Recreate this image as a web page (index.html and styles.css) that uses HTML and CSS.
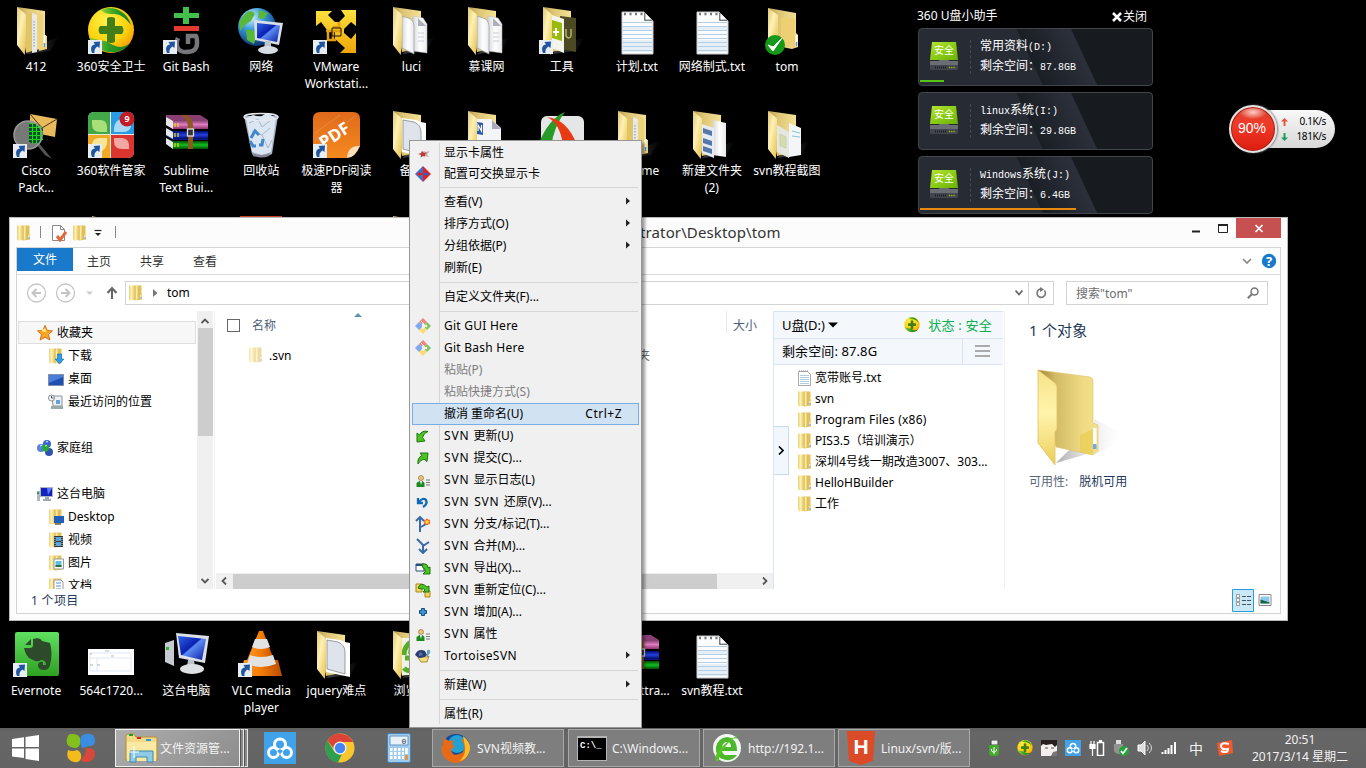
FILE: index.html
```html
<!DOCTYPE html>
<html lang="zh-CN">
<head>
<meta charset="utf-8">
<title>Desktop</title>
<link rel="stylesheet" href="styles.css">
</head>
<body>
<svg class="defs" width="0" height="0">
<defs>
<linearGradient id="gFlap" x1="0" y1="0" x2="1" y2="1"><stop offset="0" stop-color="#e2c874"/><stop offset=".4" stop-color="#fdf1b4"/><stop offset="1" stop-color="#e6c04c"/></linearGradient>
<linearGradient id="gBack" x1="0" y1="0" x2="1" y2="0"><stop offset="0" stop-color="#b89a50"/><stop offset=".35" stop-color="#ddc474"/><stop offset="1" stop-color="#f5e294"/></linearGradient>
<linearGradient id="gPage" x1="0" y1="0" x2="1" y2="0"><stop offset="0" stop-color="#d5d8dc"/><stop offset=".5" stop-color="#fff"/><stop offset="1" stop-color="#e8eaee"/></linearGradient>
<radialGradient id="gYellow" cx=".4" cy=".3" r=".8"><stop offset="0" stop-color="#fff24a"/><stop offset=".6" stop-color="#fcd00a"/><stop offset="1" stop-color="#f08a10"/></radialGradient>
<linearGradient id="gLeaf" x1="0" y1="0" x2="1" y2="0"><stop offset="0" stop-color="#8fd430"/><stop offset=".5" stop-color="#2f9c26"/><stop offset="1" stop-color="#147c20"/></linearGradient>
<radialGradient id="gGlobe" cx=".35" cy=".25" r=".8"><stop offset="0" stop-color="#d8f2ff"/><stop offset=".4" stop-color="#3a9ada"/><stop offset="1" stop-color="#08306c"/></radialGradient>
<linearGradient id="gScreen" x1="0" y1="0" x2="1" y2="1"><stop offset="0" stop-color="#2f63e8"/><stop offset=".45" stop-color="#0a20b0"/><stop offset=".5" stop-color="#5b8cf4"/><stop offset="1" stop-color="#0818a0"/></linearGradient>
<linearGradient id="gVm" x1="0" y1="0" x2="0" y2="1"><stop offset="0" stop-color="#ffe23c"/><stop offset="1" stop-color="#eda508"/></linearGradient>
<linearGradient id="gOrange" x1="0" y1="0" x2="0" y2="1"><stop offset="0" stop-color="#e06a1c"/><stop offset="1" stop-color="#f58a1e"/></linearGradient>
<linearGradient id="gPink" x1="0" y1="0" x2="0" y2="1"><stop offset="0" stop-color="#7c3a68"/><stop offset=".5" stop-color="#e07cc0"/><stop offset="1" stop-color="#8c3470"/></linearGradient>
<linearGradient id="gBlue" x1="0" y1="0" x2="0" y2="1"><stop offset="0" stop-color="#000c70"/><stop offset=".5" stop-color="#2540e0"/><stop offset="1" stop-color="#000a60"/></linearGradient>
<linearGradient id="gGr" x1="0" y1="0" x2="0" y2="1"><stop offset="0" stop-color="#044a04"/><stop offset=".5" stop-color="#10c020"/><stop offset="1" stop-color="#044a04"/></linearGradient>
<linearGradient id="gEver" x1="0" y1="0" x2="0" y2="1"><stop offset="0" stop-color="#5fe060"/><stop offset="1" stop-color="#2fa022"/></linearGradient>
<linearGradient id="gShade" x1="0" y1="0" x2="1" y2="0"><stop offset="0" stop-color="#555" stop-opacity=".8"/><stop offset="1" stop-color="#555" stop-opacity="0"/></linearGradient>
<linearGradient id="gCone" x1="0" y1="0" x2="1" y2="0"><stop offset="0" stop-color="#ff9a24"/><stop offset=".5" stop-color="#f67c08"/><stop offset="1" stop-color="#b84c00"/></linearGradient>
<linearGradient id="gDisk" x1="0" y1="0" x2="1" y2="1"><stop offset="0" stop-color="#b5e433"/><stop offset=".5" stop-color="#8ccc14"/><stop offset="1" stop-color="#69b00a"/></linearGradient>
<linearGradient id="gSf" x1="0" y1="0" x2="1" y2="0"><stop offset="0" stop-color="#ecd070"/><stop offset=".4" stop-color="#fdf2b8"/><stop offset="1" stop-color="#dcb94c"/></linearGradient>
<linearGradient id="gInner" x1="0" y1="0" x2="1" y2="0"><stop offset="0" stop-color="#a3873c"/><stop offset=".3" stop-color="#d3bb66"/><stop offset=".75" stop-color="#efdb84"/><stop offset="1" stop-color="#f3e08c"/></linearGradient>
<linearGradient id="gFront" x1="0" y1="0" x2="0" y2="1"><stop offset="0" stop-color="#f5e389"/><stop offset=".45" stop-color="#fff4ab"/><stop offset=".75" stop-color="#f6e083"/><stop offset="1" stop-color="#eccb50"/></linearGradient>
<linearGradient id="bigShade" x1="0" y1="0" x2="1" y2="0"><stop offset="0" stop-color="#777"/><stop offset="1" stop-color="#eee" stop-opacity="0"/></linearGradient>
<pattern id="pMesh" width="4" height="4" patternUnits="userSpaceOnUse"><rect width="4" height="4" fill="#052"/><path d="M0 .5h4M.5 0v4" stroke="#1fd61f"/></pattern>
</defs>

<symbol id="link" viewBox="0 0 14 14"><rect width="14" height="14" fill="#e9edf2"/><path d="M4 13C2 8 3.500 5 7 4.500L5.500 2 12 1.500 11.500 8 9.500 6.500C7 8 6 10 6.500 13z" fill="#1f559e"/></symbol>
<symbol id="fbase" viewBox="0 0 48 48"><path d="M30 36l17-6-9 14-24 3z" fill="url(#gShade)"/><path d="M5 0l28 4v37l-19 4z" fill="url(#gBack)"/></symbol>
<symbol id="flap" viewBox="0 0 48 48"><path d="M5 0l9 7.500v23l-1.200 17.500L5 38z" fill="url(#gFlap)"/></symbol>
<symbol id="folders" viewBox="0 0 48 48"><use href="#fbase"/><path d="M14 5l6 2v37l-6 2z" fill="#e0c468"/><path d="M20 6l5 2v37l-5 1z" fill="#e8e8e8"/><path d="M22 14v26" stroke="#6a9ad0" stroke-dasharray="1.500 1.500"/><path d="M25 6l6 2v19l4 2v13l-8 2z" fill="#ecd278"/><path d="M32.500 28v12" stroke="#fff" stroke-width="2"/><path d="M32.500 36v4" stroke="#4a9ae8" stroke-width="1.500"/><use href="#flap"/></symbol>
<symbol id="fdocs" viewBox="0 0 48 48"><use href="#fbase"/><path d="M25 9l10 2 4 6v29l-14-2z" fill="url(#gPage)" stroke="#bbb" stroke-width=".5"/><path d="M14 9l9 3c3 4 3 6 3 9v26l-12-6z" fill="url(#gPage)" stroke="#999" stroke-width=".7"/><path d="M30 26h6M30 30h6M30 34h6" stroke="#c6ccd6"/><path d="M30 11v8h8z" fill="#aab0ba"/><use href="#flap"/></symbol>
<symbol id="fword" viewBox="0 0 48 48"><use href="#fbase"/><path d="M14 8h14l10 9v30l-24-6z" fill="#f4f5f7"/><path d="M29 9l9 9h-9z" fill="#aab"/><path d="M14 11l6 1v12l-6-1z" fill="#2c5aa8"/><path d="M15 20v-6l3.500 6v-6" stroke="#fff" fill="none" stroke-width="1.200"/><use href="#flap"/></symbol>
<symbol id="fpics" viewBox="0 0 48 48"><use href="#fbase"/><path d="M25 9l13 3v34l-13-2z" fill="url(#gPage)"/><path d="M14 13l12 4v30l-12-5z" fill="#e6ebf2"/><path d="M15 17l9 3v5l-9-3zM15 27l9 3v5l-9-3zM15 35l9 3v5l-9-3z" fill="#5578a8"/><use href="#flap"/></symbol>
<symbol id="fshots" viewBox="0 0 48 48"><use href="#fbase"/><path d="M26 12l12 5v27l-12 2z" fill="#f2f6f8"/><path d="M29 20l8 2M29 25l8 1" stroke="#8ac4dc"/><path d="M14 14l12 7v26l-12-6z" fill="#e5e6e0"/><path d="M17 23l6 3v11l-6-2z" fill="#d4dfa8" stroke="#bbb" stroke-width=".5"/><use href="#flap"/></symbol>
<symbol id="fone" viewBox="0 0 48 48"><use href="#fbase"/><path d="M14 7l14 2 5 2 5 1v34l-24-5z" fill="#fff"/><path d="M15 9l11 2c6 3 7 6 7 12v20l-18-5z" fill="#dfe4ec" stroke="#777" stroke-width=".7"/><use href="#flap"/></symbol>
<symbol id="ftools" viewBox="0 0 48 48"><use href="#fbase"/><path d="M22 9l16 2v34l-16-3z" fill="#4b4a24"/><path d="M28 22v7q3 4 5 0v-7" fill="none" stroke="#b6b26a" stroke-width="1.500"/><path d="M14 8l12 4v34l-12-5z" fill="#f4f4ec"/><path d="M14 13l10 3v18l-10-3z" fill="#97ba0c"/><path d="M18 21v8M15 25h6" stroke="#fff" stroke-width="2"/><use href="#flap"/></symbol>
<symbol id="ftom" viewBox="0 0 48 48"><path d="M5 1l28 5v20l2 2v12l-6 2-15-3z" fill="url(#gBack)"/><path d="M18 10l14 2v29l-14-3z" fill="#edcf74"/><path d="M33.500 28v11" stroke="#fff" stroke-width="2"/><path d="M33.500 35v4" stroke="#4a9ae8" stroke-width="1.500"/><path d="M5 1l10 7v32l-10-4z" fill="url(#gFlap)"/><circle cx="12" cy="38" r="10" fill="#149a18"/><path d="M5 38l5 6 9-13-9 9z" fill="#fff" stroke="#fff"/></symbol>
<symbol id="txt" viewBox="0 0 48 48"><path d="M9 5h22l9 9v33H9z" fill="#fbfcfd" stroke="#c6cacf"/><path d="M10 19h29v4H10zM10 33h29v12H10z" fill="#dbe6f2" opacity=".6"/><path d="M10 15.500h29M10 19.500h29M10 23.500h29M10 27.500h29M10 31.500h29M10 35.500h29M10 39.500h29M10 43.500h29" stroke="#b4cfe4"/><path d="M31 5l9 9h-9z" fill="#8b9096"/><path d="M32 6v7h7" fill="#fff" stroke="#555" stroke-width=".7"/><path d="M11 7h19" stroke="#777" stroke-width="2.500" stroke-dasharray="2 3.500"/></symbol>
<symbol id="i360" viewBox="0 0 48 48"><circle cx="24" cy="23" r="23" fill="url(#gYellow)"/><path d="M14 3C26-3 41 5 44 18c-7-9-12-11-18-11-6 0-9-1-12-4z" fill="url(#gLeaf)"/><path d="M2 30c8 4 15 2 22 7 7 4 12 4 18 0C35 49 10 49 2 30z" fill="url(#gLeaf)"/><path d="M20 11q4-2 8 0v8h7q3 4 0 8h-7v8q-4 2-8 0v-8h-7q-3-4 0-8h7z" fill="#427d16"/></symbol>
<symbol id="gitbash" viewBox="0 0 48 48"><path d="M21 0h6v6h10v5H27v6h-6v-6H12V6h9z" fill="#43c04b"/><path d="M12 19h25v5H12z" fill="#e23a30"/><path d="M16 31c-3 7-1 14 8 14 10 0 11-5 11-9 0-3 0-6-1-7h-8v8" fill="none" stroke="#77777b" stroke-width="4.500"/></symbol>
<symbol id="network" viewBox="0 0 48 48"><circle cx="20" cy="20" r="19" fill="url(#gGlobe)"/><path d="M8 7q6-6 10 0l-4 7-5 3-6 7-1-9zM9 23q8-2 11 5l-3 9-7-4zM22 3l9 3-4 6-6-1z" fill="#57b83c"/><path d="M17 13l29 3-4 22-24-5z" fill="#d9dee8"/><path d="M20 16l23 2.500-3 16.500-20-4z" fill="url(#gScreen)"/><path d="M28 34h6v8h-7z" fill="#bcc4d2"/><ellipse cx="31" cy="43" rx="10" ry="4" fill="#d8dde4"/></symbol>
<symbol id="vmware" viewBox="0 0 48 48"><path d="M4 4h16l-4 4 7 7h4l6-6-4-6h15v16l-5-4-7 7v4l7 6 5-6v20H28l5-5-10-9V23h-8L9 15l-5 4z" fill="url(#gVm)"/><path d="M21 20h6v-5M14 24h9M24 33h-8v-9M30 24h-9v9" fill="none" stroke="#e0a010" stroke-width="2.500"/><path d="M20 21h9v8h-9z" fill="none" stroke="#1c1400"/></symbol>
<symbol id="cisco" viewBox="0 0 48 48"><path d="M18 3l27 5-2 18-25-5z" fill="#e8ba5c"/><path d="M18 3l12 14L45 8" fill="none" stroke="#4a340c"/><path d="M26 31l14 17-7-4-9-11z" fill="#555"/><circle cx="16" cy="24" r="14" fill="#8d8d8b" opacity=".85"/><path d="M17 12q12 0 14 6v11q-6 6-14 2z" fill="url(#pMesh)"/><circle cx="16" cy="24" r="14" fill="none" stroke="#999" stroke-width="1.500"/></symbol>
<symbol id="soft360" viewBox="0 0 48 48"><rect x="1" y="1" width="46" height="46" rx="6" fill="#eaeae4"/><path d="M1 23V7q0-6 6-6h16v22z" fill="#42a848"/><path d="M24 1h17q6 0 6 6v16H24z" fill="#289be2"/><path d="M1 24h22v23H7q-6 0-6-6z" fill="#eeaa24"/><path d="M24 24h23v17q0 6-6 6H24z" fill="#da352f"/><path d="M5 9h8q7 0 7 7v5h-7q-8 0-8-8z" fill="#a9df78"/><path d="M27 21q-1-13 11-14l6 8q-1 6-8 6z" fill="#a8d8f6"/><path d="M20 27q1 13-9 14l-6-8q1-6 7-6z" fill="#f8e49a"/><path d="M27 27h8q7 1 7 7v4h-7q-8 0-8-8z" fill="#f3a7a2"/><circle cx="40" cy="8" r="7.500" fill="#c21c24"/><text x="40" y="11.300" text-anchor="middle" class="badge9">9</text></symbol>
<symbol id="rar" viewBox="0 0 48 48"><path d="M4 4h34l8 5v9H11L4 14z" fill="#8a3f74"/><path d="M11 9h35v9H11z" fill="url(#gPink)"/><path d="M4 17l7 3h35v9H11l-7-4z" fill="#14187c"/><path d="M11 20h35v8H11z" fill="url(#gBlue)"/><path d="M4 27l7 3h35v8H11l-7-5z" fill="#064a06"/><path d="M11 30h35v8H11z" fill="url(#gGr)"/><path d="M4 6l7 4v8l-7-4zM4 17l7 4v7l-7-4zM4 27l7 4v7l-7-5z" fill="#e7e7ea"/><path d="M13 12v4M16 12v4M13 22v4M16 22v4M13 32v4M16 32v4" stroke="#e4d41c" stroke-width="1.300"/><path d="M19 4h5q7 2 7 12v22h-5V16q0-8-7-12z" fill="#8a5a20"/><rect x="25.500" y="18" width="6" height="7" fill="#333" stroke="#ddd" stroke-width="1.300"/></symbol>
<symbol id="bin" viewBox="0 0 48 48"><path d="M7 5h34l-6 38q-10 6-20 0z" fill="#a5b6c6"/><path d="M9 7l7-3 7 2 7-4 9 5-5 34-9 3-10-3z" fill="#dbe6f2"/><path d="M12 12l9-4 4 8 9-7M15 20l10 4 8-7M25 24l6 13 4-8" stroke="#a5b6c8" fill="none"/><ellipse cx="24" cy="6" rx="17" ry="3.500" fill="none" stroke="#e6eaee" stroke-width="1.500"/><path d="M14 27l4-7 4 4M13 30l3 5h3M22 34h3l1-6" fill="none" stroke="#3f86cc" stroke-width="3"/><path d="M15 42q9 4 18 0l-1 3q-8 3-16 0z" fill="#889"/></symbol>
<symbol id="pdf" viewBox="0 0 48 48"><path d="M8 1h33q7 0 7 7v27L35 47H8q-7 0-7-7V8q0-7 7-7z" fill="url(#gOrange)"/><path d="M3 36L43 5M3 22L28 4" stroke="#f0a060" opacity=".5"/><path d="M48 35q-12-1-13 12 8 0 13-12z" fill="#ffe0bb"/><text x="12" y="38" class="pdft" transform="rotate(-33 12 38)">PDF</text></symbol>
<symbol id="cam" viewBox="0 0 48 48"><rect x="3" y="5" width="43" height="42" rx="6" fill="#e5e6e8"/><path d="M0 34Q11 7 27 1 16 15 13 36z" fill="#289a26"/><path d="M9 6q20 2 30 28H25Q22 12 9 6z" fill="#e83b13"/></symbol>
<symbol id="evernote" viewBox="0 0 48 48"><rect x="3" y="0" width="44" height="44" rx="2" fill="url(#gEver)"/><path d="M12 16h6q3 0 3-3V7q7-2 9 2l8 2q3 10 0 22-1 5-6 5-6 0-6-5 1-4 5-3v3h3q0-5-5-5-4 3-10-1-5-2-7-11zM13 13l6-6v6z" fill="#2d4a2a"/></symbol>
<symbol id="shot" viewBox="0 0 48 48"><rect x="1" y="17" width="46" height="26" fill="#fff"/><path d="M3 21h41v18H3zM3 26h41M10 26v13" stroke="#d0e0f2" fill="none" stroke-width=".7"/><path d="M18 19h4M24 24h3M3 22h2M3 33h3M10 33h3" stroke="#999" stroke-width=".7"/></symbol>
<symbol id="pc" viewBox="0 0 48 48"><path d="M3 11l9-3v26l-9-4z" fill="#c7cad0"/><path d="M4 15h3v3H4z" fill="#29b82b"/><path d="M14 1l33 3-4 27-26-5z" fill="#dde0e8"/><path d="M16 4l28 3-4 21-21-5z" fill="url(#gScreen)"/><path d="M26 28h6l1 7h-8z" fill="#bbc2ca"/><ellipse cx="30" cy="37" rx="12" ry="5" fill="#dde0e3"/></symbol>
<symbol id="vlc" viewBox="0 0 48 48"><path d="M7 29h34l4 16H3z" fill="url(#gCone)"/><path d="M22 0h4l13 34q-15 9-31 0z" fill="url(#gCone)"/><path d="M18 8h12l3 8q-9 4-18 0zM13 24q11 4 23 0l3 9q-15 6-29 0z" fill="#e2e2e2"/></symbol>
<symbol id="fweb" viewBox="0 0 48 48"><use href="#fbase"/><path d="M14 7h20v37H14z" fill="#eef3e8"/><path d="M16 24q0-9 8-14l-1 9 9-4M16 37q4 5 10 0V27h-9" fill="none" stroke="#58ad26" stroke-width="5"/><use href="#flap"/></symbol>

<symbol id="sf" viewBox="0 0 16 16"><path d="M1 .5h6L7.500 15 2 15.500 1 14z" fill="url(#gSf)"/><path d="M7 .5h6.500V9l.5 1v4.500L7 15.500z" fill="#e3c158"/><path d="M7.500 1h3v13l-3 1z" fill="url(#gSf)"/><path d="M13 10v4" stroke="#fff"/><path d="M13 12v2" stroke="#4ca2e2"/></symbol>
<symbol id="star" viewBox="0 0 16 16"><path d="M8 .5l2.200 5 5.300.400-4 3.600 1.300 5.500L8 12.200 3.200 15l1.300-5.500-4-3.600 5.300-.400z" fill="#f9a824" stroke="#d66e1c"/><path d="M8 3l1.300 4-5-1z" fill="#fff08a"/></symbol>
<symbol id="sdown" viewBox="0 0 16 16"><use href="#sf"/><path d="M9.500 6h4v5h2.300L11.500 16 7.200 11h2.300z" fill="#2c9fea" stroke="#0e62b0" stroke-width=".6"/></symbol>
<symbol id="sdesk" viewBox="0 0 16 16"><path d="M0 3h16v12H0z" fill="#7e8ea4"/><path d="M1 4h14v10H1z" fill="#1d50b0"/><path d="M1 4h14v2L1 12z" fill="#4b7ed8"/></symbol>
<symbol id="srecent" viewBox="0 0 16 16"><path d="M4 2h10v10H5z" fill="#eef1f4" stroke="#8b9199"/><circle cx="3.500" cy="4" r="3" fill="#f3f5f8" stroke="#8b9199"/><path d="M3.500 2v2h2" stroke="#456" fill="none"/><path d="M8 6h4v4H8z" fill="#5fa3dc"/><path d="M3 12h12v3H3z" fill="#9aa"/></symbol>
<symbol id="shome" viewBox="0 0 16 16"><circle cx="10" cy="4" r="4" fill="#3c64d0"/><circle cx="4" cy="8" r="4" fill="#5c82e0"/><circle cx="12" cy="12" r="4" fill="#3152b5"/><circle cx="8.500" cy="8" r="3.500" fill="#2aa638"/><path d="M3 6l2-1M9 2l2-.5M8 6l2-.5" stroke="#cfe"/></symbol>
<symbol id="spc" viewBox="0 0 16 16"><path d="M0 5h3v10H0z" fill="#b1b7bf"/><path d="M0 6h2v2H0z" fill="#20aa20"/><path d="M3 1h13v10H3z" fill="#adb4c8"/><path d="M4 2h11v8H4z" fill="#1323b9"/><path d="M10 2h5l-4 7z" fill="#5a7cf4"/><path d="M6 13h8v2H6zM8 11h4v2H8z" fill="#9daab4"/></symbol>
<symbol id="sdt" viewBox="0 0 16 16"><use href="#sf"/><path d="M6 7h10v7H6z" fill="#235fba"/><path d="M7 15h6" stroke="#222"/></symbol>
<symbol id="svid" viewBox="0 0 16 16"><use href="#sf"/><path d="M6 4h9v11H6z" fill="#33383d"/><path d="M8 5h5v4H8zM8 10h5v4H8z" fill="#56a7d7"/><path d="M7 5v10M14 5v10" stroke="#ddd" stroke-dasharray="1 1"/></symbol>
<symbol id="simg" viewBox="0 0 16 16"><use href="#sf"/><path d="M6 4h9.500v10H6z" fill="#fff" stroke="#999"/><path d="M7.500 6h6v6h-6z" fill="#5fc0dc"/><path d="M7.500 10h6v2h-6z" fill="#2d6c45"/></symbol>
<symbol id="sdoc" viewBox="0 0 16 16"><use href="#sf"/><path d="M6 2h7l2 2v12H6z" fill="#fff" stroke="#999"/><path d="M8 5h5M8 8h5M8 11h5M8 14h5" stroke="#5c8fc0"/></symbol>
<symbol id="stxt" viewBox="0 0 16 16"><path d="M1.500 1.500h9l3 3v11h-12z" fill="#fff" stroke="#aaa"/><path d="M3 5.500h9M3 7.500h9M3 9.500h9M3 11.500h9M3 13.500h9" stroke="#b5cede"/><path d="M2 1h9" stroke="#888" stroke-dasharray="1 1"/></symbol>
<symbol id="nvid" viewBox="0 0 16 16"><path d="M9 5l2 1 4-1-3 3 2 3-5-1-4 2 1-3-4-1 5-1z" fill="#b5b5b5"/><path d="M6 7l1-2 2 2 3-.5-2 2v2L8 10l-2 1V9L4 8z" fill="#c8382e"/></symbol>
<symbol id="swap" viewBox="0 0 16 16"><path d="M8 0v16L0 8z" fill="#3676ca"/><path d="M8 0l8 8-8 8z" fill="#ec1c24"/><path d="M2 8l3-2.500V7h4v2H5v1.500z" fill="#ec1c24"/><path d="M8 7h3V5.500l3 2.500-3 2.500V9H8z" fill="#2b62b0"/></symbol>
<symbol id="git" viewBox="0 0 16 16"><path d="M8 0l4 4-2.500 2.500L8 5 6.500 6.500 4 4z" fill="#f28482"/><path d="M16 8l-4 4-2-2V6l2-2z" fill="#82c462"/><path d="M8 16l-4-4 2.500-2.500L8 11l1.500-1.500L12 12z" fill="#f9dc78"/><path d="M0 8l4-4 3 3v2l-3 3z" fill="#80a9ef"/><circle cx="11" cy="8" r="1.300" fill="#f0f0f0"/><path d="M6 3l3 3M8 8v3" stroke="#f0f0f0"/></symbol>
<symbol id="upd" viewBox="0 0 16 16"><path d="M2 14V5l2.500 2Q7 2 13 3.500 8.500 5 7.500 9.500L10 13z" fill="#4cc520" stroke="#1c7411"/></symbol>
<symbol id="com" viewBox="0 0 16 16"><path d="M13 3H5l2 2.500Q2 8 3 14q2-4 6-5l3 2.500z" fill="#4cc520" stroke="#1c7411"/></symbol>
<symbol id="log" viewBox="0 0 16 16"><circle cx="6" cy="6" r="2.500" fill="#efc27b" stroke="#94743d" stroke-width=".7"/><path d="M1.500 15v-4l3-2h3l2 2v4z" fill="#1d8a20"/><path d="M5 9h2l-1 4z" fill="#fff"/><path d="M11 8h4M11 10.500h4M11 13h4" stroke="#777"/></symbol>
<symbol id="rev" viewBox="0 0 16 16"><path d="M3 4v5h5M4 8q4-5 7-2 2 4-3 7" fill="none" stroke="#116ab8" stroke-width="2.300"/></symbol>
<symbol id="br" viewBox="0 0 16 16"><path d="M5 16V2M1 5l4-4 4 4M6 11l5-3" stroke="#3b6aa8" stroke-width="2" fill="none"/><circle cx="12" cy="6" r="2.500" fill="#ffd34b" stroke="#f15c1d" stroke-width="1.500" stroke-dasharray="2 .6"/></symbol>
<symbol id="mg" viewBox="0 0 16 16"><path d="M2 1l6 6v8M14 4L8 8M4 11l4 4 4-4" stroke="#3b6aa8" stroke-width="2" fill="none"/></symbol>
<symbol id="exp" viewBox="0 0 16 16"><path d="M1 4h8v7H1z" fill="#fff" stroke="#284f78"/><path d="M1 5h8" stroke="#284f78" stroke-width="2"/><path d="M7 4q6-1 6 4l2-1v7H8l2-2q1-4-2-4z" fill="#4cc520" stroke="#1c7411"/></symbol>
<symbol id="rel" viewBox="0 0 16 16"><path d="M1 2h6v8H1zM10 9h5v6h-5z" fill="#f5d45c" stroke="#a9852b"/><path d="M3 6q3-7 9-1l2-1v6H8l2-2q-1-2-4-1z" fill="#4cc520" stroke="#1c7411"/></symbol>
<symbol id="add" viewBox="0 0 16 16"><path d="M6.500 4.500h3v2h2v3h-2v2h-3v-2h-2v-3h2z" fill="#3b94cf" stroke="#174e80"/></symbol>
<symbol id="tor" viewBox="0 0 16 16"><path d="M2 8l10 1 2-1-2 6H6z" fill="#f5dd7c" stroke="#7b6521" stroke-width=".7"/><path d="M0 7Q3 0 10 3l2 4q-2 3-8 3z" fill="#2b3e72"/><path d="M4 5l2-1 2 3-4 1z" fill="#5872a8"/><path d="M12 2q4-1 3 3l-3 4z" fill="#5da3c4"/></symbol>
<symbol id="arr" viewBox="0 0 6 8"><path d="M1 .500l4 3.500-4 3.500z" fill="#222"/></symbol>
<symbol id="disk" viewBox="0 0 30 32"><path d="M3 2h24l2 18H1z" fill="url(#gDisk)"/><path d="M1 21h8l2-1h8l2 1h8v5H1z" fill="#6a6d74"/><path d="M1 25h28v4q0 1-1 1H2q-1 0-1-1z" fill="#43464c"/><path d="M6 27.500h12" stroke="#191b1e" stroke-width="2" stroke-dasharray="1 1"/><path d="M20 27.500h6" stroke="#8dc21c" stroke-width="1.500" stroke-dasharray="1.200 1"/></symbol>
<symbol id="pan" viewBox="0 0 32 32"><rect width="32" height="32" fill="#40a3e9"/><g fill="none" stroke="#fff" stroke-width="3"><circle cx="16" cy="12.500" r="5.500"/><circle cx="9.500" cy="20.500" r="5"/><circle cx="22.500" cy="20.500" r="5"/></g><path d="M13 19l3 3 3-3-3-2z" fill="#40a3e9"/></symbol>
</svg>

<main class="desktop">
<section class="icons">
<div class="ico c1 r1"><svg><use href="#folders"/></svg><span>412</span></div>
<div class="ico c2 r1"><svg><use href="#i360"/><use href="#link" x="1" y="33" width="14" height="14"/></svg><span>360安全卫士</span></div>
<div class="ico c3 r1"><svg><use href="#gitbash"/><use href="#link" x="1" y="33" width="14" height="14"/></svg><span>Git Bash</span></div>
<div class="ico c4 r1"><svg><use href="#network"/></svg><span>网络</span></div>
<div class="ico c5 r1"><svg><use href="#vmware"/><use href="#link" x="1" y="33" width="14" height="14"/></svg><span>VMware<br>Workstati...</span></div>
<div class="ico c6 r1"><svg><use href="#fdocs"/></svg><span>luci</span></div>
<div class="ico c7 r1"><svg><use href="#fdocs"/></svg><span>慕课网</span></div>
<div class="ico c8 r1"><svg><use href="#ftools"/><use href="#link" x="1" y="33" width="14" height="14"/></svg><span>工具</span></div>
<div class="ico c9 r1"><svg><use href="#txt"/></svg><span>计划.txt</span></div>
<div class="ico c10 r1"><svg><use href="#txt"/></svg><span>网络制式.txt</span></div>
<div class="ico c11 r1"><svg><use href="#ftom"/></svg><span>tom</span></div>
<div class="ico c1 r2"><svg><use href="#cisco"/><use href="#link" x="1" y="33" width="14" height="14"/></svg><span>Cisco<br>Pack...</span></div>
<div class="ico c2 r2"><svg><use href="#soft360"/><use href="#link" x="1" y="33" width="14" height="14"/></svg><span>360软件管家</span></div>
<div class="ico c3 r2"><svg><use href="#rar"/></svg><span>Sublime<br>Text Bui...</span></div>
<div class="ico c4 r2"><svg><use href="#bin"/></svg><span>回收站</span></div>
<div class="ico c5 r2"><svg><use href="#pdf"/><use href="#link" x="1" y="33" width="14" height="14"/></svg><span>极速PDF阅读<br>器</span></div>
<div class="ico c6 r2"><svg><use href="#fone"/></svg><span>备份</span></div>
<div class="ico c7 r2"><svg><use href="#fword"/></svg></div>
<div class="ico c8 r2"><svg><use href="#cam"/></svg></div>
<div class="ico c9 r2"><svg><use href="#folders"/></svg><span>Chrome</span></div>
<div class="ico c10 r2"><svg><use href="#fpics"/></svg><span>新建文件夹<br>(2)</span></div>
<div class="ico c11 r2"><svg><use href="#fshots"/></svg><span>svn教程截图</span></div>
<div class="ico c2 r3"><svg><path d="M5 0l8 2v4H5z" fill="#cdb878"/></svg></div>
<div class="ico c4 r3"><svg><rect x="3" width="42" height="44" fill="#c8432a"/></svg></div>
<div class="ico c6 r3"><svg><path d="M5 0l12 2v4H5z" fill="#cdb878"/></svg></div>
<div class="ico c1 r7"><svg><use href="#evernote" y="1"/><use href="#link" x="1" y="32" width="14" height="14"/></svg><span>Evernote</span></div>
<div class="ico c2 r7"><svg><use href="#shot" y="1"/></svg><span>564c1720...</span></div>
<div class="ico c3 r7"><svg><use href="#pc" y="1"/></svg><span>这台电脑</span></div>
<div class="ico c4 r7"><svg><use href="#vlc"/><use href="#link" x="1" y="32" width="14" height="14"/></svg><span>VLC media<br>player</span></div>
<div class="ico c5 r7"><svg><use href="#fone"/></svg><span>jquery难点</span></div>
<div class="ico c6 r7"><svg><use href="#fweb"/></svg><span>浏览器</span></div>
<div class="ico c9 r7"><svg><use href="#rar"/></svg><span class="tail">ttra...</span></div>
<div class="ico c10 r7"><svg><use href="#txt"/></svg><span>svn教程.txt</span></div>
</section>

<aside class="udisk">
<header><span>360 U盘小助手</span><span class="close"><svg width="12" height="12" viewBox="0 0 12 12"><path d="M2 2l8 8M10 2l-8 8" stroke="#fff" stroke-width="2.500"/></svg>关闭</span></header>
<div class="drive"><div class="dicon"><svg width="30" height="32"><use href="#disk"/></svg><b>安全</b></div><div class="dtxt"><p>常用资料<i>(D:)</i></p><p>剩余空间：<i>87.8GB</i></p></div><div class="meter green"></div></div>
<div class="drive"><div class="dicon"><svg width="30" height="32"><use href="#disk"/></svg><b>安全</b></div><div class="dtxt"><p><i>linux</i>系统<i>(I:)</i></p><p>剩余空间：<i>29.8GB</i></p></div></div>
<div class="drive"><div class="dicon"><svg width="30" height="32"><use href="#disk"/></svg><b>安全</b></div><div class="dtxt"><p><i>Windows</i>系统<i>(J:)</i></p><p>剩余空间：<i>6.4GB</i></p></div><div class="meter orange"></div></div>
</aside>

<aside class="speed">
<div class="ball">90%</div>
<div class="rates"><p><svg width="7" height="8" viewBox="0 0 7 8"><path d="M3.500 0L7 3.500H4.500V8h-2V3.500H0z" fill="#e4573d"/></svg>0.1K/s</p><p><svg width="7" height="8" viewBox="0 0 7 8"><path d="M3.500 8L7 4.500H4.500V0h-2v4.500H0z" fill="#1aa05a"/></svg>181K/s</p></div>
</aside>

<section class="window">
<div class="titlebar">
<div class="quick"><svg width="16" height="16"><use href="#sf"/></svg><s></s><svg class="q2" width="16" height="18" viewBox="0 0 16 18"><path d="M1.500 1.500h8l4 4v11h-12z" fill="#fff" stroke="#888"/><path d="M9.500 1.500v4h4" fill="none" stroke="#888"/><path d="M6 12l3 4 6-8" fill="none" stroke="#e2683c" stroke-width="3"/></svg><svg width="16" height="16"><use href="#sf"/></svg><svg class="q4" width="8" height="8" viewBox="0 0 8 8"><path d="M.5 1.500h7" stroke="#222" stroke-width="1.200"/><path d="M1 4h6L4 7z" fill="#222"/></svg><s></s></div>
<div class="title">C:\Users\Administrator\Desktop\tom</div>
<div class="ctrl"><svg width="90" height="20" viewBox="0 0 90 20"><path d="M1 13.500h8" stroke="#222" stroke-width="2"/><path d="M27.500 7.500h9v7h-9z" stroke="#222" fill="none"/><path d="M27 7h10" stroke="#222" stroke-width="2"/><path d="M45 0h45v20H45z" fill="#c75050"/><path d="M64.500 7l7 7M71.500 7l-7 7" stroke="#fff" stroke-width="1.700"/></svg></div>
</div>
<div class="client">
<div class="ribbon"><b>文件</b><span>主页</span><span>共享</span><span>查看</span><svg width="36" height="16" viewBox="0 0 36 16"><path d="M3 6l4 4 4-4" fill="none" stroke="#888" stroke-width="1.700"/><circle cx="29" cy="8" r="7.200" fill="#1979ca"/><text x="29" y="12.500" text-anchor="middle" class="help">?</text></svg></div>
<div class="addr">
<svg class="navbtn" width="98" height="22" viewBox="0 0 98 22"><circle cx="10.500" cy="11" r="9" fill="none" stroke="#c4c4c4" stroke-width="1.300"/><circle cx="39.500" cy="11" r="9" fill="none" stroke="#c4c4c4" stroke-width="1.300"/><path d="M15 11H7M10.500 7l-4 4 4 4M35 11h8M39.500 7l4 4-4 4" fill="none" stroke="#c4c4c4" stroke-width="2"/><path d="M60 9.500h7l-3.500 3.500z" fill="#ccc"/><path d="M86 17V7M81.500 11L86 6l4.500 5" fill="none" stroke="#666" stroke-width="2"/></svg>
<div class="path"><svg width="16" height="16"><use href="#sf"/></svg><svg class="crumb" width="5" height="8" viewBox="0 0 5 8"><path d="M0 0l4.500 4L0 8z" fill="#777"/></svg><span>tom</span><svg class="dd" width="8" height="6" viewBox="0 0 8 6"><path d="M.5 .500L4 4.500 7.500 .500" fill="none" stroke="#666" stroke-width="1.700"/></svg><div class="refresh"><svg width="12" height="12" viewBox="0 0 12 12"><path d="M9.500 3.500A4.200 4.200 0 1 1 5 2.100" fill="none" stroke="#777" stroke-width="1.600"/><path d="M5 0l4 2.500-4 2.500z" fill="#777"/></svg></div></div>
<div class="search"><span>搜索"tom"</span><svg width="12" height="12" viewBox="0 0 12 12"><circle cx="7.500" cy="4.500" r="3.500" fill="none" stroke="#777" stroke-width="1.500"/><path d="M5 7L.8 11.200" stroke="#777" stroke-width="2"/></svg></div>
</div>
<div class="panes">
<nav class="tree">
<div class="row sel"><svg><use href="#star"/></svg>收藏夹</div>
<div class="row sub"><svg><use href="#sdown"/></svg>下载</div>
<div class="row sub"><svg><use href="#sdesk"/></svg>桌面</div>
<div class="row sub"><svg><use href="#srecent"/></svg>最近访问的位置</div>
<div class="row gap"><svg><use href="#shome"/></svg>家庭组</div>
<div class="row gap"><svg><use href="#spc"/></svg>这台电脑</div>
<div class="row sub"><svg><use href="#sdt"/></svg>Desktop</div>
<div class="row sub"><svg><use href="#svid"/></svg>视频</div>
<div class="row sub"><svg><use href="#simg"/></svg>图片</div>
<div class="row sub"><svg><use href="#sdoc"/></svg>文档</div>
</nav>
<div class="vbar"><svg width="8" height="6" viewBox="0 0 8 6"><path d="M.5 5L4 1.500 7.500 5" fill="none" stroke="#555" stroke-width="1.800"/></svg><i></i><svg width="8" height="6" viewBox="0 0 8 6"><path d="M.5 1L4 4.500 7.500 1" fill="none" stroke="#555" stroke-width="1.800"/></svg></div>
<div class="files">
<div class="cols"><i class="box"></i><span class="name">名称</span><svg class="sort" width="8" height="5" viewBox="0 0 8 5"><path d="M0 4l4-4 4 4z" fill="#5f94b4"/></svg><span class="size">大小</span></div>
<div class="file"><svg><use href="#sf"/></svg><span>.svn</span><em>文件夹</em></div>
<div class="hbar"><svg width="6" height="8" viewBox="0 0 6 8"><path d="M5 .500L1.500 4 5 7.500" fill="none" stroke="#555" stroke-width="1.800"/></svg><i></i><svg width="6" height="8" viewBox="0 0 6 8"><path d="M1 .500L4.500 4 1 7.500" fill="none" stroke="#555" stroke-width="1.800"/></svg></div>
</div>
<div class="upan">
<div class="uh"><span>U盘(D:)</span><svg width="10" height="6" viewBox="0 0 10 6"><path d="M0 .500h10L5 5.500z" fill="#000"/></svg><svg class="s360" width="16" height="16" viewBox="0 0 48 48"><use href="#i360"/></svg><span class="ok">状态 : 安全</span></div>
<div class="uh u2"><span>剩余空间: 87.8G</span><div class="burger"><i></i><i></i><i></i></div></div>
<div class="ub"><div class="handle"><svg width="6" height="9" viewBox="0 0 6 9"><path d="M1 .500l4 4-4 4" fill="none" stroke="#000" stroke-width="1.600"/></svg></div>
<ul><li><svg><use href="#stxt"/></svg>宽带账号.txt</li><li><svg><use href="#sf"/></svg>svn</li><li class="wide"><svg><use href="#sf"/></svg>Program Files (x86)</li><li><svg><use href="#sf"/></svg>PIS3.5（培训演示）</li><li><svg><use href="#sf"/></svg>深圳4号线一期改造3007、303...</li><li><svg><use href="#sf"/></svg>HelloHBuilder</li><li><svg><use href="#sf"/></svg>工作</li></ul></div>
</div>
<div class="detail">
<h2>1 个对象</h2>
<svg width="96" height="98" viewBox="0 0 96 98"><path d="M58 50l29 14-12 11 1 1-18 10zM20 94l16-16 22 5z" fill="url(#bigShade)" opacity=".6"/><path d="M2 1l52 7q3 1 3 4v42l5 2v26l-4 2-1 2-37-8z" fill="url(#gInner)" stroke="#dfc163" stroke-width=".6"/><path d="M44 66l13-6v26l-13-3z" fill="#e9c83f" opacity=".55"/><path d="M2 1l17 13q2 2 2 4v42l-2 3v33L2 74z" fill="url(#gFront)" stroke="#dfc163" stroke-width=".8"/><path d="M57 59h3.500v18H57z" fill="#fff"/><path d="M57 75h3.500v5H57z" fill="#6fa8f0"/></svg>
<p><span>可用性:</span>脱机可用</p>
</div>
</div>
<div class="status"><span>1 个项目</span><svg width="48" height="24" viewBox="0 0 48 24"><path d="M.5 .500h21v22H.500z" fill="#cce8f6" stroke="#26a0da"/><path d="M4.500 5.500h3v3h-3zM4.500 9.500h3v3h-3zM4.500 13.500h3v3h-3z" fill="#fff" stroke="#888" stroke-width=".8"/><path d="M10 7.500h9M10 11.500h9M10 15.500h9" stroke="#456" stroke-dasharray="4 1"/><path d="M27 5.500h12v11H27z" fill="#fff" stroke="#888"/><path d="M28.500 7.500h9v7h-9z" fill="#8cc8ec"/><path d="M28.500 14.500v-4l9 3v1z" fill="#17633c"/></svg></div>
</div>
</section>

<section class="menu">
<div class="mi short"><svg><use href="#nvid"/></svg>显示卡属性</div>
<div class="mi short"><svg><use href="#swap"/></svg>配置可交换显示卡</div>
<hr>
<div class="mi"><svg></svg>查看(V)<svg class="sub"><use href="#arr"/></svg></div>
<div class="mi"><svg></svg>排序方式(O)<svg class="sub"><use href="#arr"/></svg></div>
<div class="mi"><svg></svg>分组依据(P)<svg class="sub"><use href="#arr"/></svg></div>
<div class="mi"><svg></svg>刷新(E)</div>
<hr>
<div class="mi"><svg></svg>自定义文件夹(F)...</div>
<hr>
<div class="mi gitm"><svg><use href="#git"/></svg>Git GUI Here</div>
<div class="mi gitm"><svg><use href="#git"/></svg>Git Bash Here</div>
<div class="mi off"><svg></svg>粘贴(P)</div>
<div class="mi off"><svg></svg>粘贴快捷方式(S)</div>
<div class="mi hot"><svg></svg>撤消 重命名(U)<kbd>Ctrl+Z</kbd></div>
<div class="mi svn"><svg><use href="#upd"/></svg><span><em>SVN</em> 更新(U)</span></div>
<div class="mi svn"><svg><use href="#com"/></svg><span><em>SVN</em> 提交(C)...</span></div>
<div class="mi svn"><svg><use href="#log"/></svg><span><em>SVN</em> 显示日志(L)</span></div>
<div class="mi svn"><svg><use href="#rev"/></svg><span><em>SVN SVN</em> 还原(V)...</span></div>
<div class="mi svn"><svg><use href="#br"/></svg><span><em>SVN</em> 分支/标记(T)...</span></div>
<div class="mi svn"><svg><use href="#mg"/></svg><span><em>SVN</em> 合并(M)...</span></div>
<div class="mi svn"><svg><use href="#exp"/></svg><span><em>SVN</em> 导出(X)...</span></div>
<div class="mi svn"><svg><use href="#rel"/></svg><span><em>SVN</em> 重新定位(C)...</span></div>
<div class="mi svn"><svg><use href="#add"/></svg><span><em>SVN</em> 增加(A)...</span></div>
<div class="mi svn"><svg><use href="#log"/></svg><span><em>SVN</em> 属性</span></div>
<div class="mi tort"><svg><use href="#tor"/></svg>TortoiseSVN<svg class="sub"><use href="#arr"/></svg></div>
<hr>
<div class="mi"><svg></svg>新建(W)<svg class="sub"><use href="#arr"/></svg></div>
<hr>
<div class="mi"><svg></svg>属性(R)</div>
</section>
</main>

<footer class="taskbar">
<div class="tile start"><svg width="28" height="26" viewBox="0 0 28 26"><path d="M0 4l12-1.700V12H0zM13.500 2L27 0v12H13.500zM0 13.500h12V23L0 21.500zM13.500 13.500H27V26l-13.500-2z" fill="#fff"/></svg></div>
<div class="tile orb"><svg width="30" height="30" viewBox="0 0 30 30"><path d="M5 1q11-1 9 10-1 4-5 4Q-1 14 1 6q1-5 4-5z" fill="#84c01c"/><path d="M19 1q10-2 10 7 0 5-6 5l-7 2q-5-11 3-14z" fill="#3b8de2"/><path d="M2 17q4 2 9 0 5 2 4 8-1 5-7 4-9-2-6-12z" fill="#f2bd1a"/><path d="M20 15q10-1 9 7-2 8-10 7-6-1-3-4 4-3 4-10z" fill="#d84739"/></svg></div>
<div class="task active"><svg width="34" height="30" viewBox="0 0 34 30"><path d="M2 3q0-2 2-2h6l2 3h20q1 0 1 2v21H2z" fill="#f1da86" stroke="#b78e32"/><path d="M3 9h29v19H3z" fill="#fae9a2"/><path d="M5 1h4v2H5z" fill="#13a02c"/><path d="M13 4h4v2h-4z" fill="#d22"/><path d="M22 6h5v2h-5z" fill="#299ae2"/><path d="M6 29V18h23v11h-6v-5H12v5z" fill="#8ecbe6" stroke="#3c88ac"/><path d="M10 13v12M5 19h10" stroke="#fff"/></svg><span>文件资源管...</span></div>
<i class="stack"></i><i class="stack"></i>
<div class="tile panb"><svg width="32" height="32"><use href="#pan"/></svg></div>
<div class="tile chrome"><svg width="30" height="30" viewBox="0 0 30 30"><circle cx="15" cy="15" r="14.500" fill="#f8c62d"/><path d="M2.500 7.500A14.500 14.500 0 0 1 28 9H15l-6 7z" fill="#db4437"/><path d="M2.400 7.600L9.500 19l5.500 3 2-1-4 8.500A14.500 14.500 0 0 1 2.400 7.600z" fill="#2f9e50"/><circle cx="15" cy="15" r="6.500" fill="#f4f4f4"/><circle cx="15" cy="15" r="5.200" fill="#4285f4"/></svg></div>
<div class="tile calc"><svg width="24" height="30" viewBox="0 0 24 30"><rect x=".5" y=".5" width="23" height="29" rx="2" fill="#9fcbee" stroke="#4a83b2"/><path d="M3 3h18v9H3z" fill="#e7f2f8" stroke="#6a98be"/><text x="17" y="10.500" class="cnum" text-anchor="middle">0</text><path d="M3 16.500h14M3 20.500h14M3 24.500h14" stroke="#fff" stroke-width="3" stroke-dasharray="2.500 1.500"/><path d="M19.500 15v6" stroke="#fff" stroke-width="2.500"/><path d="M19.500 22v5" stroke="#e88c28" stroke-width="2.500"/></svg></div>
<div class="task t1"><svg width="30" height="30" viewBox="0 0 30 30"><circle cx="15" cy="15" r="14" fill="#164c92"/><circle cx="16" cy="11" r="9" fill="#22a2d4"/><path d="M3 5l5 3 5-1-2 4 3 3-4 2q1 8 8 5 6-1 5-9l-3-7q10 5 8 14-3 11-14 11Q-1 27 1 13z" fill="#e86a16"/><path d="M22 3q10 8 6 17-3 7-10 8 7-5 6-14z" fill="#f9ba2c"/></svg><span>SVN视频教...</span></div>
<div class="task t2"><svg width="30" height="25" viewBox="0 0 30 25"><path d="M0 0h30v25H0z" fill="#b5b5b5"/><path d="M1 2h28v22H1z" fill="#000"/><text x="3" y="12" class="cmd">C:\_</text></svg><span>C:\Windows...</span></div>
<div class="task t3"><svg width="30" height="30" viewBox="0 0 30 30"><circle cx="15" cy="15" r="14" fill="#f4f8f2"/><path d="M25 18H10q1 5 6 4h9q-4 6-11 5Q3 25 4 14 6 5 15 4q10 1 10 14zM10 14h9q0-5-4-5t-5 5z" fill="#4cb82b"/><path d="M4 28Q1 22 12 12 20 4 28 2q-5 0-3 4-4-3-12 8-7 9-6 14z" fill="#56c522"/></svg><span>http://192.1...</span></div>
<div class="task t4"><svg width="28" height="34" viewBox="0 0 28 34"><path d="M0 0h28l-2 30-12 4L2 30z" fill="#dc4b28"/><text x="14" y="23" class="hb" text-anchor="middle">H</text></svg><span>Linux/svn/版...</span></div>
<div class="tray">
<svg viewBox="0 0 16 16"><path d="M5 0h7v5H5z" fill="#eee" stroke="#444"/><path d="M3 5h10v8q0 3-3 3H6q-3 0-3-3z" fill="#43a92c"/><path d="M8 14V7M5.500 9v2L8 12.500l2.500-2V9" stroke="#fff" fill="none"/></svg>
<svg viewBox="0 0 48 48"><use href="#i360"/></svg>
<svg viewBox="0 0 16 16"><path d="M0 0h16v16H0z" fill="#f3efec"/><path d="M0 0h16v5l-2 2-3-3-6 1-3-1-2 2z" fill="#28201f"/><path d="M4 8h3M10 8h3" stroke="#555"/><path d="M12 12l4-1v5h-6z" fill="#777"/></svg>
<svg viewBox="0 0 32 32"><use href="#pan"/></svg>
<svg viewBox="0 0 16 16"><path d="M2 1v3M5 1v3M1 4.500h5v4H1zM3.500 8v8" stroke="#fff" fill="#fff" stroke-width="1.200"/><path d="M8.500 2.500h6v13h-6z" fill="#5f5f5f" stroke="#fff" stroke-width="1.500"/><path d="M10 0h3v2h-3z" fill="#fff"/></svg>
<svg viewBox="0 0 16 16"><path d="M3 0h5v4H3z" fill="#ddd"/><path d="M1 4h9v9q-6 3-9-2z" fill="#929292"/><circle cx="11" cy="11" r="5" fill="#25a43b"/><path d="M8 11l2 2.500L14 8" fill="none" stroke="#fff" stroke-width="1.600"/></svg>
<svg viewBox="0 0 16 16"><path d="M1 5h3l4-4v14l-4-4H1z" fill="#ddd" stroke="#fff"/><path d="M10 5q3 3 0 6M12 3q5 5 0 10" fill="none" stroke="#ddd"/></svg>
<svg viewBox="0 0 16 16"><path d="M1.500 14v-2M4.500 14v-4M7.500 14V8M10.500 14V5M14 14V2" stroke="#fff" stroke-width="2"/></svg>
<span class="ime">中</span>
<svg viewBox="0 0 16 16"><path d="M0 3l15-3 1 13-14 3z" fill="#f4582b"/><path d="M12 4Q4 2 4 6t7 3q0 5-7 2" fill="none" stroke="#fff" stroke-width="2"/></svg>
</div>
<div class="clock">20:51<br>2017/3/14 星期二</div>
</footer>
</body>
</html>
```
FILE: styles.css
```css
* { box-sizing: border-box; }
html, body { margin: 0; width: 1366px; height: 768px; overflow: hidden; background: #000; }
body { display: flex; flex-direction: column; font: 12px/17px "Noto Sans", "Noto Sans CJK SC", sans-serif; color: #000; }
p, h2, ul { margin: 0; padding: 0; font-weight: normal; }
i, em { font-style: normal; }
.defs { position: absolute; }
.desktop { position: relative; height: 728px; overflow: hidden; }

/* desktop icon grid */
.icons { display: grid; grid-template-columns: repeat(11, 75.1px); grid-template-rows: repeat(7, 104px); margin-left: -1.5px; padding-top: 7px; }
.ico { display: flex; flex-direction: column; align-items: center; color: #fff; text-align: center; white-space: nowrap; }
.ico svg { width: 48px; height: 48px; flex: none; }
.ico span { margin-top: 3px; }
.ico .tail { width: 66px; text-align: right; }
.badge9 { font: bold 9px "Open Sans", sans-serif; fill: #fff; }
.pdft { font: bold 17px "Open Sans", sans-serif; fill: #fff; }
.c1 { grid-column: 1; } .c2 { grid-column: 2; } .c3 { grid-column: 3; } .c4 { grid-column: 4; }
.c5 { grid-column: 5; } .c6 { grid-column: 6; } .c7 { grid-column: 7; } .c8 { grid-column: 8; }
.c9 { grid-column: 9; } .c10 { grid-column: 10; } .c11 { grid-column: 11; }
.r1 { grid-row: 1; } .r2 { grid-row: 2; } .r3 { grid-row: 3; } .r7 { grid-row: 7; }
.r3 { padding-top: 1px; }

/* removable disk helper */
.udisk { position: absolute; left: 917px; top: 6px; width: 236px; color: #fff; font-family: "Liberation Mono", "Noto Sans CJK SC", monospace; }
.udisk header { display: flex; justify-content: space-between; height: 22px; line-height: 20px; padding-right: 6px; font-family: "Noto Sans", "Noto Sans CJK SC", sans-serif; }
.close { display: flex; align-items: center; }
.drive { position: relative; height: 58px; margin: 0 0 6px 1px; padding: 11px 0 0 10px; display: flex; border: 1px solid #42454a; border-radius: 4px; background: linear-gradient(65deg, #272b34 0 47.5%, #1a1e25 48%, #2b303a 68.500%, #171b20 69%); }
.dicon { position: relative; width: 42px; height: 34px; border-right: 1px dashed #454a52; }
.dicon b { position: absolute; left: 5px; top: 4px; font-weight: 400; font-size: 10px; line-height: 16px; white-space: nowrap; }
.dtxt { padding-left: 9px; margin-top: -3px; }
.dtxt p { height: 20px; line-height: 20px; white-space: pre; }
.dtxt i { font-size: 10px; }
.meter { position: absolute; left: 1px; bottom: 3px; height: 2px; }
.green { width: 24px; background: #55c411; }
.orange { width: 156px; background: #e88a0c; }

/* network speed ball */
.speed { position: absolute; left: 1229px; top: 105px; width: 106px; height: 48px; display: flex; align-items: center; }
.ball { position: relative; flex: none; width: 48px; height: 48px; border: 2px solid #e4e4e4; border-radius: 50%; background: radial-gradient(ellipse 14px 7px at 50% 12%, #ffcec4, transparent), linear-gradient(#d94231, #f03a28 40%, #dc1c10); box-shadow: inset 0 0 0 1px #a02418, 1px 0 2px #777; color: #fff; font: 14px/43px "Liberation Sans", sans-serif; text-align: center; text-indent: -2px; z-index: 1; }
.rates { margin-left: -28px; width: 86px; height: 38px; padding: 4px 9px 0 32px; border-radius: 19px; background: linear-gradient(#f8f8f8, #d8d8d8); font: 10px/15px "Noto Sans", sans-serif; }
.rates p { display: flex; justify-content: space-between; align-items: center; height: 15px; letter-spacing: -.4px; }

/* explorer window */
.window { position: absolute; left: 9px; top: 217px; width: 1279px; height: 404px; border: 1px solid #b8b8b8; background: #fcfcfc; padding: 0 6px 6px; display: flex; flex-direction: column; }
.titlebar { height: 29px; display: grid; grid-template-columns: 330px 1fr 330px; }
.quick { display: flex; align-items: flex-start; padding: 7px 0 0 0; }
.quick s { width: 1px; height: 12px; background: #888; margin: 1px 9px 0 8px; }
.quick .q2 { margin: -1px 5px 0 1px; }
.quick .q4 { margin: 4px 5px 0 6px; }
.title { text-align: center; font-size: 15px; line-height: 28px; color: #333; letter-spacing: .12px; }
.ctrl { text-align: right; }
.ctrl svg { display: inline-block; vertical-align: top; }
.client { flex: 1; border: 1px solid #d4d4d4; background: #fff; display: flex; flex-direction: column; }
.ribbon { display: flex; height: 27px; border-bottom: 1px solid #dadada; color: #333; line-height: 27px; }
.ribbon b { width: 56px; height: 23px; line-height: 23px; background: #1979ca; color: #fff; font-weight: normal; text-align: center; margin-right: 14px; }
.ribbon span { width: 53px; }
.ribbon svg { margin: 5px 4px 0 auto; }
.help { font: bold 13px "Open Sans", sans-serif; fill: #fff; }
.addr { display: flex; padding-top: 6px; height: 36px; }
.navbtn { margin: 1px 0 0 9px; flex: none; }
.path { width: 929px; height: 24px; margin-left: 1px; border: 1px solid #d4d4d4; display: flex; align-items: center; padding-left: 2px; }
.path span { padding-bottom: 2px; }
.crumb { margin: 0 9px 0 9px; }
.dd { margin-left: auto; margin-right: 5px; }
.refresh { width: 25px; height: 22px; border-left: 1px solid #d4d4d4; display: flex; align-items: center; justify-content: center; }
.search { width: 202px; height: 24px; margin-left: 12px; border: 1px solid #d4d4d4; display: flex; align-items: center; justify-content: space-between; padding: 0 8px 0 9px; color: #6d6d6d; }
.panes { display: flex; height: 278px; }
.tree { width: 180px; overflow: hidden; padding: 10px 1px 0; }
.row { display: flex; align-items: center; height: 23px; padding-left: 19px; }
.row svg { width: 16px; height: 16px; margin-right: 4px; flex: none; }
.row.sub { padding-left: 30px; }
.row.sel { border: 1px solid #dedede; background: #f7f7f7; padding-left: 18px; }
.row.gap { margin-top: 23px; }
.vbar { width: 16px; background: #f0f0f0; display: flex; flex-direction: column; align-items: center; padding: 7px 0 5px; }
.vbar i { width: 15px; height: 108px; margin-top: 4px; background: #cdcdcd; }
.vbar svg:last-child { margin-top: auto; }
.files { width: 559px; padding-left: 1px; margin-left: 1px; border-left: 1px solid #f0f0f0; display: flex; flex-direction: column; color: #4c607a; }
.cols { display: flex; height: 24px; align-items: flex-start; }
.box { width: 13px; height: 13px; border: 1px solid #666; margin: 8px 12px 0 11px; }
.name { width: 100px; margin-top: 6px; }
.sort { margin: 2px 364px 0 2px; }
.size { height: 22px; border-left: 1px solid #e0e8f2; padding: 6px 0 0 6px; }
.file { display: flex; align-items: center; height: 40px; padding-left: 32px; color: #000; }
.file svg { width: 16px; height: 16px; opacity: .55; margin-right: 5px; }
.file span { width: 345px; }
.file em { color: #6d6d6d; }
.hbar { margin-top: auto; height: 16px; background: #f0f0f0; display: flex; align-items: center; padding: 0 5px; }
.hbar i { width: 484px; height: 15px; margin-left: 6px; background: #cdcdcd; }
.hbar svg:last-child { margin-left: auto; }
.upan { width: 230px; border-left: 1px solid #d9e4f4; flex: none; }
.uh { height: 27px; border-top: 1px solid #d9e4f4; background: #f4f8fd; display: flex; align-items: center; padding: 0 11px 0 8px; font-size: 13px; letter-spacing: -.1px; }
.uh svg { margin-left: 3px; }
.uh .s360 { margin-left: auto; margin-right: 8px; }
.ok { color: #0ab04c; letter-spacing: .2px; }
.u2 { border-bottom: 1px solid #d9e4f4; padding-right: 0; letter-spacing: .1px; }
.burger { margin-left: auto; width: 41px; height: 25px; border-left: 1px solid #d9e4f4; padding: 6px 13px 0 12px; display: flex; flex-direction: column; gap: 3px; }
.burger i { height: 2px; background: #aaa; }
.ub { display: flex; }
.handle { width: 15px; height: 49px; margin-top: 61px; border: 1px solid #c8daf0; border-left: 0; background: #f2f7fd; display: flex; align-items: center; justify-content: center; }
.ub ul { list-style: none; padding: 2px 0 0 8px; white-space: nowrap; }
.ub li { display: flex; align-items: center; height: 21px; }
.ub li svg { width: 16px; height: 16px; margin-right: 2px; }
.wide { letter-spacing: .2px; }
.detail { flex: 1; margin-left: 1px; border-left: 1px solid #f0f0f0; padding: 8px 0 0 24px; color: #1e395b; }
.detail h2 { font-size: 15px; line-height: 22px; letter-spacing: .2px; }
.detail > svg { display: block; margin: 28px 0 0 7px; }
.detail p { margin-top: 6px; }
.detail p span { color: #5a6779; margin-right: 11px; }
.status { flex: 1; display: flex; justify-content: space-between; padding-left: 14px; line-height: 24px; color: #1e395b; }
.status span { height: 24px; letter-spacing: .3px; }

/* context menu */
.menu { position: absolute; left: 409px; top: 140px; width: 233px; height: 588px; border: 1px solid #979797; background: linear-gradient(90deg, transparent 29px, #d5d5d5 29px 30px, transparent 30px) 0 2px / 100% 581px no-repeat, #f0f0f0; padding: 2px; box-shadow: 3px 3px 3px rgba(0,0,0,.4); }
.mi { display: flex; align-items: center; height: 22px; padding: 0 0 2px 3px; }
.mi > svg:first-child { width: 16px; height: 16px; margin-right: 13px; flex: none; position: relative; top: 1px; }
.short { height: 20.5px; padding-bottom: 1px; }
.mi .sub { width: 6px; height: 8px; margin-left: auto; margin-right: 8px; }
.menu hr { height: 1px; border: 0; background: #d5d5d5; margin: 3px 1px 3px 28px; }
.mi.off { color: #7d7d7d; }
.mi.hot { background: #d1e2f2; box-shadow: inset 0 0 0 1px #78aee5; }
.mi kbd { font: inherit; margin-left: auto; margin-right: 17px; letter-spacing: .5px; }
.gitm { letter-spacing: .25px; }
.svn em { letter-spacing: .8px; }
.svn span { word-spacing: 1px; }
.tort { letter-spacing: .45px; }

/* taskbar */
.taskbar { height: 40px; background: linear-gradient(#5f5f5f, #666 5px, #636363); color: #f2f2f2; display: flex; align-items: center; }
.taskbar > * { flex: none; }
.tile { display: flex; justify-content: center; align-items: center; }
.start { width: 51px; }
.orb { width: 60px; }
.task { width: 132px; height: 38px; border: 1px solid #a8a8a8; background: #7e7e7e; display: flex; align-items: center; padding-left: 8px; white-space: nowrap; }
.task span { margin-left: 6px; }
.active { width: 125px; margin-left: 4px; border-color: #f0f0f0; background: linear-gradient(135deg, #adadad, #8d8d8d); }
.active span { margin-left: 2px; }
.stack { width: 4px; height: 38px; border: 1px solid #e5e5e5; border-left-color: #555; background: #888; }
.panb { width: 32px; margin-left: 16px; }
.chrome { width: 30px; margin-left: 29px; }
.calc { width: 24px; margin-left: 32px; margin-right: 21px; }
.t2 { margin-left: 4px; }
.t3, .t4 { margin-left: 3px; }
.t2 span { margin-left: 5px; }
.cmd { font: bold 9px "Liberation Mono", monospace; fill: #fff; }
.cnum { font: 8px "Liberation Mono", monospace; fill: #234; }
.hb { font: bold 21px "Liberation Sans", sans-serif; fill: #fff; }
.tray { display: flex; align-items: center; margin-left: 16px; }
.tray svg { width: 16px; height: 16px; margin-right: 8px; }
.tray svg:first-child { margin-right: 15px; }
.ime { font-size: 14px; width: 15px; margin: 0 13px 0 4px; }
.clock { margin-left: auto; margin-right: 12px; width: 108px; text-align: center; line-height: 17px; white-space: nowrap; }
```
